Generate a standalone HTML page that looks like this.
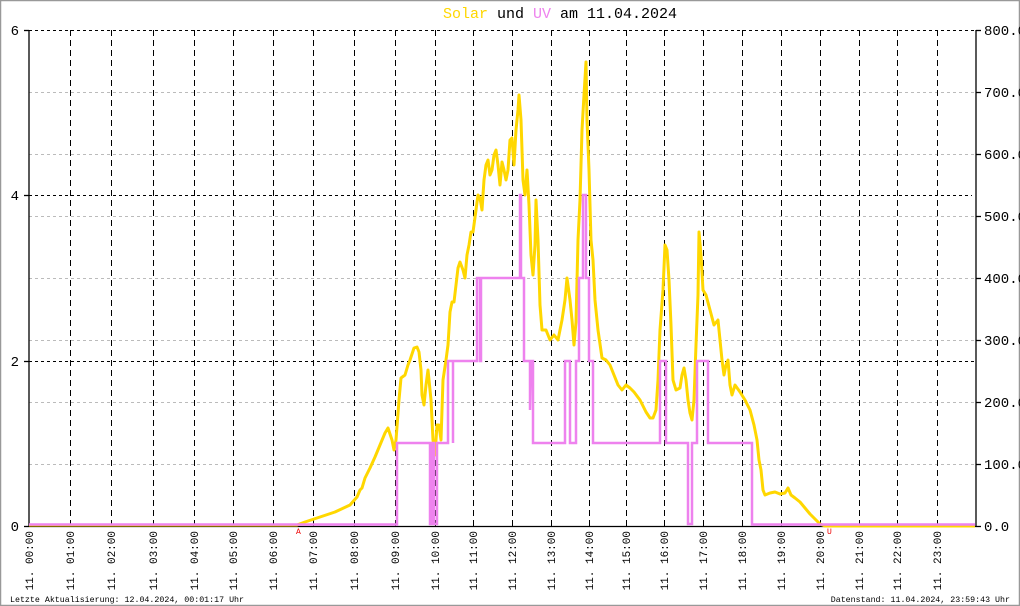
<!DOCTYPE html>
<html><head><meta charset="utf-8"><style>
html,body{margin:0;padding:0;background:#fff}
svg{display:block}
text{font-family:"Liberation Mono","DejaVu Sans Mono",monospace}
</style></head><body>
<svg width="1020" height="606" viewBox="0 0 1020 606" xmlns="http://www.w3.org/2000/svg">
<rect x="0.5" y="0.5" width="1019" height="605" fill="#fff" stroke="#999" stroke-width="1.5"/>
<text x="560" y="18" font-size="15" text-anchor="middle"><tspan fill="#ffd700">Solar</tspan> und <tspan fill="#ee82ee">UV</tspan> am 11.04.2024</text>
<g stroke="#bbb" stroke-width="1" stroke-dasharray="3,3">
<line x1="29" y1="92.5" x2="976" y2="92.5"/><line x1="29" y1="154.5" x2="976" y2="154.5"/>
<line x1="29" y1="216.5" x2="976" y2="216.5"/><line x1="29" y1="278.5" x2="976" y2="278.5"/>
<line x1="29" y1="340.5" x2="976" y2="340.5"/><line x1="29" y1="402.5" x2="976" y2="402.5"/>
<line x1="29" y1="464.5" x2="976" y2="464.5"/>
</g>
<g stroke="#000" stroke-width="1" stroke-dasharray="3,3">
<line x1="29" y1="30.5" x2="976" y2="30.5"/><line x1="29" y1="195.5" x2="972" y2="195.5"/>
<line x1="29" y1="361.5" x2="976" y2="361.5"/>
</g>
<g stroke="#000" stroke-width="1" stroke-dasharray="6,4">
<line x1="70.5" y1="30" x2="70.5" y2="526"/><line x1="111.5" y1="30" x2="111.5" y2="526"/>
<line x1="153.5" y1="30" x2="153.5" y2="526"/><line x1="194.5" y1="30" x2="194.5" y2="526"/>
<line x1="233.5" y1="30" x2="233.5" y2="526"/><line x1="273.5" y1="30" x2="273.5" y2="526"/>
<line x1="313.5" y1="30" x2="313.5" y2="526"/><line x1="354.5" y1="30" x2="354.5" y2="526"/>
<line x1="395.5" y1="30" x2="395.5" y2="526"/><line x1="435.5" y1="30" x2="435.5" y2="526"/>
<line x1="473.5" y1="30" x2="473.5" y2="526"/><line x1="512.5" y1="30" x2="512.5" y2="526"/>
<line x1="551.5" y1="30" x2="551.5" y2="526"/><line x1="589.5" y1="30" x2="589.5" y2="526"/>
<line x1="626.5" y1="30" x2="626.5" y2="526"/><line x1="664.5" y1="30" x2="664.5" y2="526"/>
<line x1="703.5" y1="30" x2="703.5" y2="526"/><line x1="742.5" y1="30" x2="742.5" y2="526"/>
<line x1="781.5" y1="30" x2="781.5" y2="526"/><line x1="820.5" y1="30" x2="820.5" y2="526"/>
<line x1="859.5" y1="30" x2="859.5" y2="526"/><line x1="897.5" y1="30" x2="897.5" y2="526"/>
<line x1="937.5" y1="30" x2="937.5" y2="526"/>
</g>
<g stroke="#000" stroke-width="1.3">
<line x1="29" y1="30" x2="29" y2="527"/><line x1="976" y1="30" x2="976" y2="527"/>
<line x1="29" y1="526.5" x2="976" y2="526.5"/>
<line x1="24" y1="30.5" x2="29" y2="30.5"/><line x1="24" y1="195.5" x2="29" y2="195.5"/>
<line x1="24" y1="361.5" x2="29" y2="361.5"/><line x1="24" y1="526.5" x2="29" y2="526.5"/>
<line x1="976" y1="30.5" x2="981" y2="30.5"/><line x1="976" y1="92.5" x2="981" y2="92.5"/>
<line x1="976" y1="154.5" x2="981" y2="154.5"/><line x1="976" y1="216.5" x2="981" y2="216.5"/>
<line x1="976" y1="278.5" x2="981" y2="278.5"/><line x1="976" y1="340.5" x2="981" y2="340.5"/>
<line x1="976" y1="402.5" x2="981" y2="402.5"/><line x1="976" y1="464.5" x2="981" y2="464.5"/>
<line x1="976" y1="526.5" x2="981" y2="526.5"/>
</g>
<g font-size="14" fill="#000" text-anchor="end">
<text x="19" y="35">6</text><text x="19" y="200">4</text><text x="19" y="366">2</text><text x="19" y="531">0</text>
</g>
<g font-size="14" fill="#000">
<text x="984" y="35">800.0</text><text x="984" y="97">700.0</text><text x="984" y="159">600.0</text>
<text x="984" y="221">500.0</text><text x="984" y="283">400.0</text><text x="984" y="345">300.0</text>
<text x="984" y="407">200.0</text><text x="984" y="469">100.0</text><text x="984" y="531">0.0</text>
</g>
<polyline fill="none" stroke="#ffd700" stroke-width="3" stroke-linejoin="round" points="29,525 297,525 305,522 320,517 335,512 350,505 357,497 360,490 362,488 365,478 370,468 375,457 380,445 385,433 388,428 392,440 394,450 396,440 399,400 401,378 405,375 408,365 410,360 414,348 417,347 419,352 421,370 422,395 424,405 426,385 428,370 431,400 433,440 435,455 437,425 439,425 441,440 443,380 446,360 448,345 450,312 452,302 454,302 456,285 458,268 460,262 463,270 465,278 467,255 469,245 471,232 473,232 476,210 478,195 480,198 482,210 484,180 486,165 488,160 490,175 492,170 494,155 496,150 498,165 500,185 502,162 504,170 506,180 508,170 510,140 512,138 514,165 516,130 518,110 519,95 521,120 523,180 525,195 527,170 529,205 531,255 533,275 535,245 536,200 538,240 540,305 542,330 546,330 550,340 554,335 558,340 562,320 565,300 567,278 570,300 572,320 574,345 576,322 578,240 580,200 582,130 584,95 586,62 587,120 589,170 591,240 593,260 595,300 598,330 602,358 606,360 610,365 614,375 618,385 622,390 626,385 630,388 634,392 640,400 646,412 650,418 653,418 656,410 658,380 660,330 663,290 665,245 667,250 669,280 671,325 673,380 676,390 680,388 682,375 684,368 686,380 688,400 690,413 692,420 694,400 696,345 698,295 699,232 701,255 703,290 706,295 710,310 714,325 718,320 720,340 722,360 724,375 726,365 728,360 730,385 732,395 735,385 740,392 745,400 750,410 754,425 757,440 759,460 761,470 763,490 765,495 770,493 775,492 780,494 785,493 788,488 791,495 795,498 800,502 805,508 810,514 815,519 820,524 825,526 975,526"/>
<polyline fill="none" stroke="#ee82ee" stroke-width="2.5" points="29,524.5 397,524.5 397,443 430,443 430,524 432,524 432,443 434,443 434,524 437,524 437,443 448,443 448,361 453,361 453,443 453,361 477,361 477,278 480,278 480,361 481,361 481,278 520,278 520,195 521,195 521,278 524,278 524,361 530,361 530,410 531,361 533,361 533,443 565,443 565,361 570,361 570,443 576,443 576,361 579,361 579,278 583,278 583,195 586,195 586,278 589,278 589,361 593,361 593,443 660,443 660,361 666,361 666,443 688,443 688,524 692,524 692,443 697,443 697,361 708,361 708,443 752,443 752,524.5 975,524.5"/>
<text x="296" y="534" font-size="8" fill="#e00">A</text>
<text x="827" y="534" font-size="8" fill="#e00">U</text>
<g font-size="11" fill="#000" text-anchor="end">
<text transform="translate(33,531) rotate(-90)">11. 00:00</text>
<text transform="translate(74,531) rotate(-90)">11. 01:00</text>
<text transform="translate(115,531) rotate(-90)">11. 02:00</text>
<text transform="translate(157,531) rotate(-90)">11. 03:00</text>
<text transform="translate(198,531) rotate(-90)">11. 04:00</text>
<text transform="translate(237,531) rotate(-90)">11. 05:00</text>
<text transform="translate(277,531) rotate(-90)">11. 06:00</text>
<text transform="translate(317,531) rotate(-90)">11. 07:00</text>
<text transform="translate(358,531) rotate(-90)">11. 08:00</text>
<text transform="translate(399,531) rotate(-90)">11. 09:00</text>
<text transform="translate(439,531) rotate(-90)">11. 10:00</text>
<text transform="translate(477,531) rotate(-90)">11. 11:00</text>
<text transform="translate(516,531) rotate(-90)">11. 12:00</text>
<text transform="translate(555,531) rotate(-90)">11. 13:00</text>
<text transform="translate(593,531) rotate(-90)">11. 14:00</text>
<text transform="translate(630,531) rotate(-90)">11. 15:00</text>
<text transform="translate(668,531) rotate(-90)">11. 16:00</text>
<text transform="translate(707,531) rotate(-90)">11. 17:00</text>
<text transform="translate(746,531) rotate(-90)">11. 18:00</text>
<text transform="translate(785,531) rotate(-90)">11. 19:00</text>
<text transform="translate(824,531) rotate(-90)">11. 20:00</text>
<text transform="translate(863,531) rotate(-90)">11. 21:00</text>
<text transform="translate(901,531) rotate(-90)">11. 22:00</text>
<text transform="translate(941,531) rotate(-90)">11. 23:00</text>
</g>
<text x="10" y="602" font-size="8.3" fill="#000">Letzte Aktualisierung: 12.04.2024, 00:01:17 Uhr</text>
<text x="1010" y="602" font-size="8.3" fill="#000" text-anchor="end">Datenstand: 11.04.2024, 23:59:43 Uhr</text>
</svg>
</body></html>
